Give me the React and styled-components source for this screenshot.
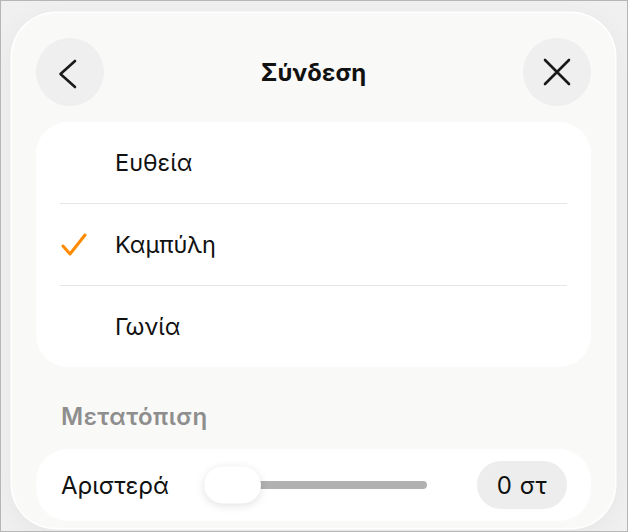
import React, { useState } from "react";
import styled, { createGlobalStyle } from "styled-components";

const GlobalStyle = createGlobalStyle`
  html, body {
    margin: 0;
    padding: 0;
    background: #ffffff;
  }
  body {
    font-family: Inter, "Noto Sans", "Liberation Sans", sans-serif;
    color: #111;
    -webkit-font-smoothing: antialiased;
  }
`;

const Frame = styled.div`
  width: 628px;
  height: 532px;
  box-sizing: border-box;
  border: 1px solid #b6b6b6;
  background: #f0f0f0;
  padding: 12px 0 0 11px;
  overflow: hidden;
`;

const Panel = styled.div`
  width: 603px;
  height: 515px;
  box-sizing: border-box;
  background: #f9f9f8;
  border-radius: 44px;
  box-shadow: 0 0 0 1.5px #ffffff, 0 6px 30px rgba(0, 0, 0, 0.05);
  padding: 25px 24px 0;
  overflow: hidden;
`;

const Header = styled.div`
  display: flex;
  align-items: center;
  justify-content: space-between;
  height: 68px;
`;

const RoundButton = styled.button`
  width: 68px;
  height: 68px;
  border-radius: 50%;
  border: none;
  background: #efefef;
  display: flex;
  align-items: center;
  justify-content: center;
  padding: 0;
  cursor: pointer;
`;

const Title = styled.h1`
  margin: 0;
  font-size: 24px;
  font-weight: 700;
  letter-spacing: 0.1px;
`;

const Card = styled.div`
  margin-top: 16px;
  background: #ffffff;
  border-radius: 32px;
  padding: 0 24px;
`;

const Option = styled.div`
  height: 81px;
  display: flex;
  align-items: center;
  border-top: ${(p) => (p.$first ? "none" : "1px solid #e6e6e6")};
  font-size: 23.5px;
  cursor: pointer;
`;

const CheckSlot = styled.div`
  width: 55px;
  display: flex;
  align-items: center;
`;

const SectionLabel = styled.div`
  height: 82px;
  box-sizing: border-box;
  padding: 35px 0 0 25px;
  font-size: 24px;
  font-weight: 600;
  letter-spacing: 0.5px;
  color: #8e8e8e;
  line-height: 30px;
`;

const SliderCard = styled.div`
  height: 72px;
  background: #ffffff;
  border-radius: 32px;
  display: flex;
  align-items: center;
  padding: 0 24px 0 25px;
`;

const SliderLabel = styled.span`
  font-size: 24px;
  width: 143px;
`;

const Track = styled.div`
  flex: 1;
  height: 8px;
  border-radius: 4px;
  background: #b1b1b1;
  position: relative;
  margin-right: 50px;
`;

const Thumb = styled.div`
  position: absolute;
  left: 0;
  top: 50%;
  width: 57px;
  height: 37px;
  border-radius: 19px;
  background: #ffffff;
  transform: translateY(-50%);
  box-shadow: 0 2px 10px rgba(0, 0, 0, 0.12);
`;

const ValuePill = styled.div`
  width: 90px;
  height: 48px;
  border-radius: 24px;
  background: #ededed;
  display: flex;
  align-items: center;
  justify-content: center;
  font-size: 24px;
  letter-spacing: 0.5px;
`;

const options = ["Ευθεία", "Καμπύλη", "Γωνία"];

export default function App() {
  const [selected, setSelected] = useState("Καμπύλη");
  return (
    <>
      <GlobalStyle />
      <Frame>
        <Panel>
          <Header>
            <RoundButton aria-label="Πίσω">
              <svg width="68" height="68" viewBox="0 0 68 68" fill="none">
                <path
                  d="M39 23 L24.5 36 L39 49"
                  stroke="#1a1a1a"
                  strokeWidth="2.6"
                  strokeLinecap="round"
                  strokeLinejoin="round"
                />
              </svg>
            </RoundButton>
            <Title>Σύνδεση</Title>
            <RoundButton aria-label="Κλείσιμο">
              <svg width="68" height="68" viewBox="0 0 68 68" fill="none">
                <path
                  d="M22 22 L46 46 M46 22 L22 46"
                  stroke="#1a1a1a"
                  strokeWidth="2.6"
                  strokeLinecap="round"
                />
              </svg>
            </RoundButton>
          </Header>
          <Card>
            {options.map((o, i) => (
              <Option key={o} $first={i === 0} onClick={() => setSelected(o)}>
                <CheckSlot>
                  {selected === o && (
                    <svg width="28" height="24" viewBox="0 0 28 24" fill="none">
                      <path
                        d="M3 13 L10 21 L25 2"
                        stroke="#ff8a00"
                        strokeWidth="3"
                        strokeLinecap="round"
                        strokeLinejoin="round"
                      />
                    </svg>
                  )}
                </CheckSlot>
                {o}
              </Option>
            ))}
          </Card>
          <SectionLabel>Μετατόπιση</SectionLabel>
          <SliderCard>
            <SliderLabel>Αριστερά</SliderLabel>
            <Track>
              <Thumb />
            </Track>
            <ValuePill>0 στ</ValuePill>
          </SliderCard>
        </Panel>
      </Frame>
    </>
  );
}
